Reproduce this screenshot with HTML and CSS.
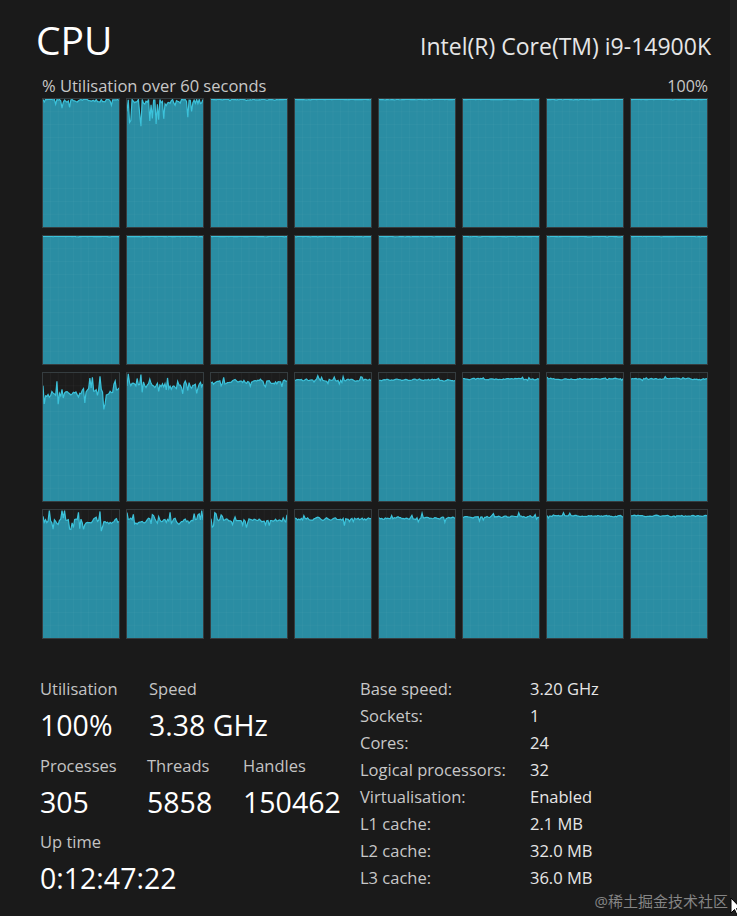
FILE: index.html
```html
<!DOCTYPE html>
<html>
<head lang="en">
    <meta charset="UTF-8">
    <title>CPU</title>
    <link rel="stylesheet" href="styles.css">
</head>
<body>
<div id="page">
    <div class="head">
        <div class="title">CPU</div>
        <div class="model">Intel(R) Core(TM) i9-14900K</div>
    </div>
    <div class="sub">
        <span class="caption">% Utilisation over 60 seconds</span>
        <span>100%</span>
    </div>
    <div id="graphs"></div>

    <div class="stats">
        <div class="live">
            <div class="row">
                <div class="stat w109"><div class="label">Utilisation</div><div class="value">100%</div></div>
                <div class="stat"><div class="label">Speed</div><div class="value">3.38 GHz</div></div>
            </div>
            <div class="row">
                <div class="stat w107"><div class="label">Processes</div><div class="value">305</div></div>
                <div class="stat w96"><div class="label">Threads</div><div class="value">5858</div></div>
                <div class="stat"><div class="label">Handles</div><div class="value">150462</div></div>
            </div>
            <div class="row">
                <div class="stat"><div class="label">Up time</div><div class="value">0:12:47:22</div></div>
            </div>
        </div>
        <div class="info">
            <span>Base speed:</span><span class="val">3.20 GHz</span>
            <span>Sockets:</span><span class="val">1</span>
            <span>Cores:</span><span class="val">24</span>
            <span>Logical processors:</span><span class="val">32</span>
            <span>Virtualisation:</span><span class="val">Enabled</span>
            <span>L1 cache:</span><span class="val">2.1 MB</span>
            <span>L2 cache:</span><span class="val">32.0 MB</span>
            <span>L3 cache:</span><span class="val">36.0 MB</span>
        </div>
    </div>
</div>
<div class="mark">@稀土掘金技术社区</div>
<svg class="cursor" width="10" height="20" viewBox="0 0 10 20"><path d="M1 1 L1 16 L4.5 12.5 L7 18 L9 17 L6.5 11.5 L11 11.5 Z" fill="#fff" stroke="#000" stroke-width="1"/></svg>
<script src="script.js"></script>
</body>
</html>
```

FILE: styles.css
```css
*{
    margin: 0;
    padding: 0;
}
body{
    width: 737px;
    height: 916px;
    overflow: hidden;
    position: relative;
    background: linear-gradient(to right, #1a1a1a 730px, #202020 730px);
    color: #e8e8e8;
    font-family: "Open Sans", "Noto Sans CJK SC", sans-serif;
}
#page{
    padding: 14px 0 0 0;
}
.head{
    display: flex;
    justify-content: space-between;
    align-items: baseline;
    padding: 0 26px 0 36px;
}
.title{
    font-size: 39px;
    line-height: 52px;
    color: #fff;
}
.model{
    font-size: 23px;
    color: #e6e6e6;
}
.sub{
    display: flex;
    justify-content: space-between;
    margin: 10px 29px 0 42px;
    font-size: 16px;
    line-height: 20px;
    color: #c8c8c8;
}
.caption{
    font-size: 16.5px;
}
#graphs{
    margin: 2px 0 0 42px;
    width: 666px;
    display: grid;
    grid-template-columns: repeat(8, 78px);
    grid-template-rows: repeat(4, 130px);
    column-gap: 6px;
    row-gap: 7px;
}
.cell{
    border: 1px solid #353d40;
    background-color: #1c1c1c;
}
.cell svg{
    display: block;
    width: 76px;
    height: 128px;
}
.stats{
    display: flex;
    margin-top: 39px;
    padding-left: 40px;
}
.live{
    width: 320px;
}
.row{
    display: flex;
    margin-bottom: 4.5px;
}
.w109{
    width: 109px;
}
.w107{
    width: 107px;
}
.w96{
    width: 96px;
}
.label{
    font-size: 16.5px;
    line-height: 22px;
    color: #c4c4c4;
}
.value{
    font-size: 28.5px;
    line-height: 50px;
    color: #fff;
}
.info{
    margin-top: -2.5px;
    display: grid;
    grid-template-columns: 170px auto;
    grid-auto-rows: 27px;
    align-items: center;
    font-size: 16.5px;
    line-height: 22px;
    color: #c8c8c8;
}
.info .val{
    color: #e6e6e6;
}
.mark{
    position: absolute;
    right: 9px;
    bottom: 5px;
    font-size: 15px;
    color: #858585;
}
.cursor{
    position: absolute;
    left: 730px;
    top: 897px;
}
```

FILE: script.js
```js
var box = document.getElementById("graphs");
var seed = 11;
function rnd(){
    seed = (seed * 16807) % 2147483647;
    return (seed - 1) / 2147483646;
}

// [top gap, noise, spike height, spike chance]
var cfg = [
    [1, 3, 8, 0.25], [3, 6, 24, 0.3], [0.5, 1, 3, 0.05], [0.5, 0.5, 0, 0], [0.5, 0.5, 0, 0], [0.5, 0.5, 0, 0], [0.5, 0.5, 0, 0], [0.5, 0.5, 0, 0],
    [0.5, 0.5, 0, 0], [0.5, 0.5, 0, 0], [0.5, 0.5, 0, 0], [0.5, 0.5, 0, 0], [0.5, 0.5, 0, 0], [0.5, 0.5, 0, 0], [0.5, 0.5, 0, 0], [0.5, 0.5, 0, 0],
    [20, 7, 16, 0.3], [12, 5, 10, 0.25], [9, 3, 6, 0.2], [7, 2, 4, 0.15], [7, 1.5, 3, 0.1], [6, 1.2, 2, 0.1], [6, 1.2, 2, 0.08], [6, 1.2, 2, 0.08],
    [11, 5, 10, 0.3], [11, 5, 10, 0.3], [10, 3, 8, 0.25], [9, 2.5, 6, 0.2], [8, 2, 5, 0.15], [7, 1.5, 4, 0.12], [6, 1.2, 3, 0.1], [6, 1.2, 3, 0.08]
];

for (var c = 0; c < cfg.length; c++) {
    var p = cfg[c];
    var pts = [];
    var n = 60;
    var prev = p[0];
    for (var i = 0; i <= n; i++) {
        var y = p[0] + (rnd() - 0.5) * 2 * p[1];
        y = (y + prev) / 2;
        prev = y;
        if (rnd() < p[3]) {
            y += (rnd() < 0.5 ? -1 : 1) * rnd() * p[2];
        }
        if (y < 0.5) y = 0.5;
        pts.push((i * 76 / n).toFixed(2) + "," + y.toFixed(2));
    }
    var lines = "";
    for (var k = 1; k < 10; k++) {
        lines += '<line x1="' + (k * 7.6) + '" y1="0" x2="' + (k * 7.6) + '" y2="128"/>';
    }
    for (var h = 1; h < 10; h++) {
        lines += '<line x1="0" y1="' + (h * 12.8) + '" x2="76" y2="' + (h * 12.8) + '"/>';
    }
    var svg = '<svg viewBox="0 0 76 128" preserveAspectRatio="none">' +
        '<polygon points="0,128 ' + pts.join(" ") + ' 76,128" fill="#2a8da3"/>' +
        '<g stroke="#ffffff" stroke-opacity="0.03" stroke-width="1">' + lines + '</g>' +
        '<polyline points="' + pts.join(" ") + '" fill="none" stroke="#3cc2da" stroke-width="1.2"/>' +
        '</svg>';
    var cell = document.createElement("div");
    cell.className = "cell";
    cell.innerHTML = svg;
    box.appendChild(cell);
}
```
